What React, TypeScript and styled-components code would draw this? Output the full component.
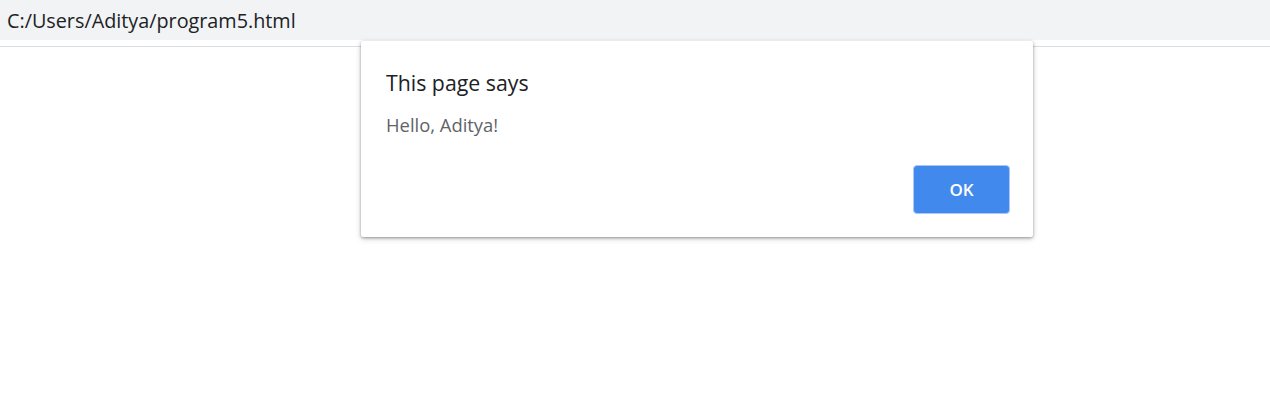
import styled, { createGlobalStyle } from "styled-components";

const GlobalStyle = createGlobalStyle`
  html, body {
    margin: 0;
    padding: 0;
    background: #ffffff;
    font-family: "Open Sans", "Noto Sans", sans-serif;
  }
`;

const Page = styled.div`
  position: relative;
  width: 1270px;
  height: 417px;
  overflow: hidden;
  background: #ffffff;
`;

const AddressBar = styled.div`
  height: 40px;
  background: #f1f3f4;
  display: flex;
  align-items: center;
  padding-left: 7px;
  font-size: 19.8px;
  color: #202124;
`;

const Divider = styled.div`
  margin-top: 6px;
  height: 1px;
  background: #dadce0;
`;

const Dialog = styled.div`
  position: absolute;
  top: 41px;
  left: 361px;
  width: 672px;
  height: 196px;
  box-sizing: border-box;
  background: #ffffff;
  border-radius: 2px;
  box-shadow: 0 1px 3px rgba(0, 0, 0, 0.35), 0 2px 6px rgba(0, 0, 0, 0.15);
  padding: 28px 23px 23px 25px;
  display: flex;
  flex-direction: column;
`;

const Title = styled.h1`
  margin: 0;
  font-size: 21.3px;
  font-weight: 400;
  color: #202124;
  line-height: 28px;
`;

const Message = styled.p`
  margin: 16px 0 0;
  font-size: 18.4px;
  color: #5f6368;
  line-height: 24px;
`;

const Actions = styled.div`
  margin-top: auto;
  display: flex;
  justify-content: flex-end;
`;

const Button = styled.button`
  width: 97px;
  height: 49px;
  border: 1px solid #a8c7fa;
  border-radius: 4px;
  background: #4189ec;
  color: #ffffff;
  font-family: "Open Sans", "Noto Sans", sans-serif;
  font-size: 17px;
  font-weight: 600;
  cursor: pointer;
`;

export default function App() {
  return (
    <Page>
      <GlobalStyle />
      <AddressBar>C:/Users/Aditya/program5.html</AddressBar>
      <Divider />
      <Dialog>
        <Title>This page says</Title>
        <Message>Hello, Aditya!</Message>
        <Actions>
          <Button>OK</Button>
        </Actions>
      </Dialog>
    </Page>
  );
}
